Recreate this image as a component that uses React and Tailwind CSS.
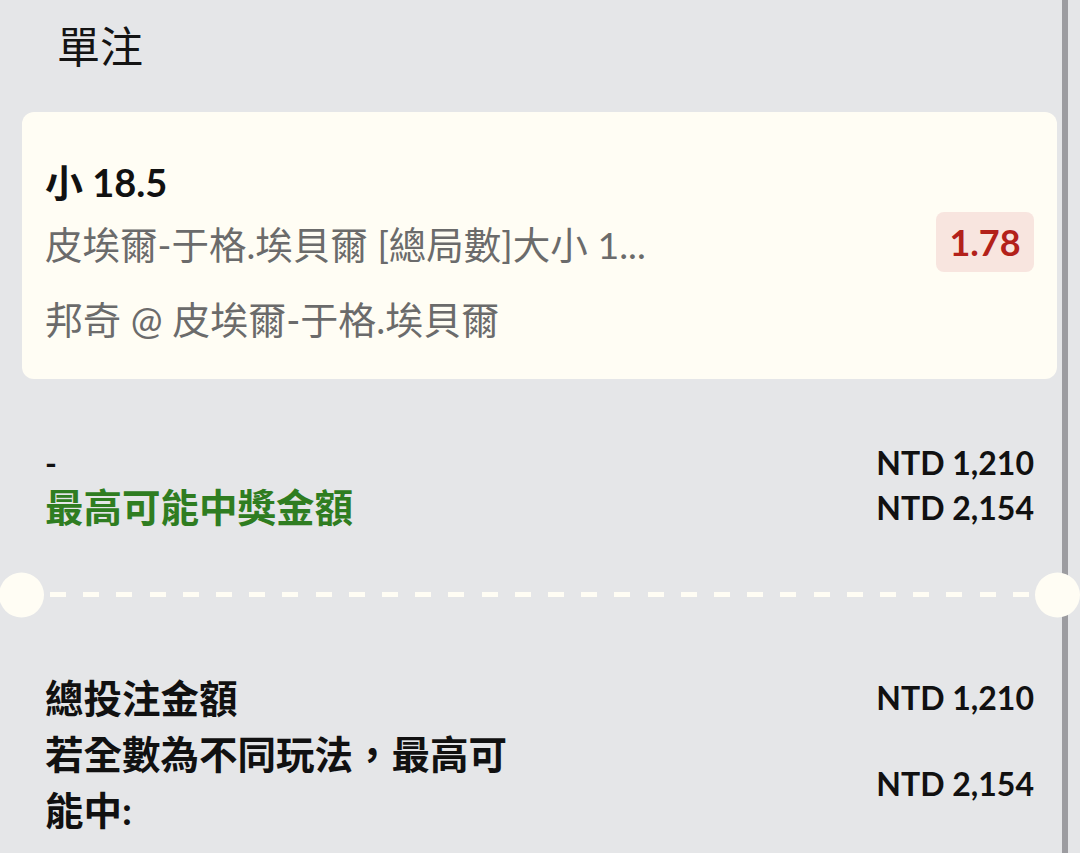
import React from 'react';

const App = () => {
  return (
    <div className="flex h-[853px] w-full overflow-hidden bg-[#e5e6e8] font-[Lato,Noto_Sans_CJK_TC,sans-serif]">
      <main className="w-[1062px] shrink-0 pl-[22px] pr-[5px]">
        {/* Header */}
        <div className="h-[112px] pl-[35px] pt-[20px]">
          <h1 className="text-[43px] leading-[54px] font-normal text-[#141414]">單注</h1>
        </div>

        {/* Selection card */}
        <div className="flex h-[267px] items-center justify-between rounded-[12px] bg-[#fffdf4] px-[23px]">
          <div className="min-w-0 pt-[10px]">
            <p className="text-[38px] leading-[62px] font-bold text-[#111]">小 18.5</p>
            <p className="text-[37.5px] leading-[64px] text-[#6b6b6b] whitespace-nowrap">皮埃爾-于格.埃貝爾 [總局數]大小 1...</p>
            <p className="mt-[10px] text-[38px] leading-[64px] text-[#6b6b6b] whitespace-nowrap">邦奇 @ 皮埃爾-于格.埃貝爾</p>
          </div>
          <div className="mb-[7px] flex h-[60px] w-[98px] items-center justify-center rounded-[8px] bg-[#f8e5df]">
            <span className="text-[36px] font-bold text-[#b3211a]">1.78</span>
          </div>
        </div>

        {/* Stake & potential win */}
        <div className="px-[23px] pt-[61px]">
          <div className="flex h-[45px] items-center justify-between">
            <span className="text-[32px] font-bold text-[#111]">-</span>
            <span className="text-[32px] font-bold text-[#111]">NTD 1,210</span>
          </div>
          <div className="flex h-[45px] items-center justify-between">
            <span className="text-[38.5px] font-bold text-[#2f7d21]">最高可能中獎金額</span>
            <span className="text-[32px] font-bold text-[#111]">NTD 2,154</span>
          </div>
        </div>

        {/* Ticket divider */}
        <div className="relative mt-[62px] h-[5px]">
          <div className="ml-[28px] mr-[26px] h-full bg-[repeating-linear-gradient(90deg,#fffdf4_0px,#fffdf4_16px,transparent_16px,transparent_33.2px)]" />
          <div className="absolute left-[-23px] top-1/2 z-10 h-[45px] w-[45px] -translate-y-1/2 rounded-full bg-[#fffdf4]" />
          <div className="absolute right-[-23px] top-1/2 z-10 h-[45px] w-[45px] -translate-y-1/2 rounded-full bg-[#fffdf4]" />
        </div>

        {/* Totals */}
        <div className="px-[23px] pt-[73px]">
          <div className="flex items-center justify-between">
            <span className="text-[38.5px] leading-[56px] font-bold text-[#111]">總投注金額</span>
            <span className="text-[32px] font-bold text-[#111]">NTD 1,210</span>
          </div>
          <div className="flex items-center justify-between">
            <span className="w-[480px] text-[38.5px] leading-[56px] font-bold text-[#111]">若全數為不同玩法，最高可能中:</span>
            <span className="pt-[4px] text-[32px] font-bold text-[#111]">NTD 2,154</span>
          </div>
        </div>
      </main>
      <div className="w-[6px] shrink-0 bg-[#9c9ca0]" />
      <div className="flex-1" />
    </div>
  );
};

export default App;
